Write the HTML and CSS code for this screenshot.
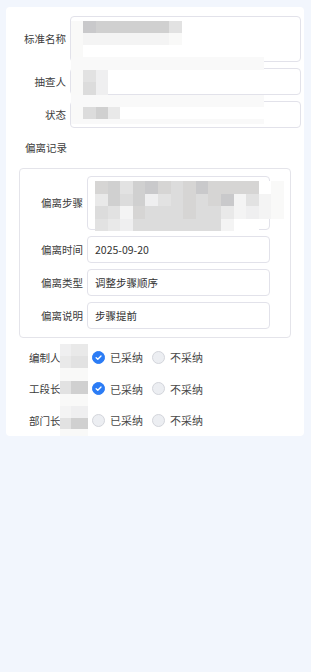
FILE: index.html
```html
<!DOCTYPE html>
<html lang="zh">
<head>
<meta charset="utf-8">
<title>偏离记录</title>
<link rel="stylesheet" href="styles.css">
</head>
<body>
<div class="card">
  <div class="mask-top">
    <div class="mrow h12"><i class="c g9"></i><i class="c g1"></i><i class="c g2"></i><i class="c g2"></i><i class="c g2"></i><i class="c g2"></i><i class="c g2"></i><i class="c g2"></i><i class="c g5"></i></div>
    <div class="mrow h12"><i class="c g9"></i><i class="c g8"></i><i class="c g8"></i><i class="c g8"></i><i class="c g8"></i><i class="c g8"></i><i class="c g8"></i><i class="c g8"></i><i class="c g9"></i></div>
    <div class="mrow h12"><i class="c g9"></i></div>
    <div class="mrow h13 band"></div>
    <div class="mrow h12"><i class="c g9"></i><i class="c g5"></i><i class="c g7"></i></div>
    <div class="mrow h13"><i class="c g9"></i><i class="c g4"></i><i class="c g7"></i></div>
    <div class="mrow h12 band"></div>
    <div class="mrow h12"><i class="c g9"></i><i class="c g4"></i><i class="c g2"></i><i class="c g6"></i></div>
    <div class="mrow h5 band"></div>
  </div>

  <div class="field">
    <span class="label">标准名称</span>
    <div class="box area"></div>
  </div>
  <div class="field">
    <span class="label">抽查人</span>
    <div class="box"></div>
  </div>
  <div class="field">
    <span class="label">状态</span>
    <div class="box"></div>
  </div>

  <div class="section-title">偏离记录</div>

  <div class="record">
    <div class="field inner">
      <span class="label">偏离步骤</span>
      <div class="box area tall">
        <div class="mask-step">
          <div class="srow"><i class="s g3"></i><i class="s g2"></i><i class="s g5"></i><i class="s g2"></i><i class="s g1"></i><i class="s g3"></i><i class="s g4"></i><i class="s g3"></i><i class="s g1"></i><i class="s g3"></i><i class="s g3"></i><i class="s g3"></i><i class="s g3"></i><i class="s w"></i><i class="s g9"></i></div>
          <div class="srow"><i class="s g6"></i><i class="s g2"></i><i class="s g4"></i><i class="s g2"></i><i class="s g7"></i><i class="s g5"></i><i class="s g4"></i><i class="s g3"></i><i class="s g4"></i><i class="s g3"></i><i class="s g1"></i><i class="s g8"></i><i class="s g5"></i><i class="s g8"></i><i class="s g9"></i></div>
          <div class="srow"><i class="s g4"></i><i class="s g5"></i><i class="s g8"></i><i class="s g3"></i><i class="s g4"></i><i class="s g4"></i><i class="s g4"></i><i class="s g3"></i><i class="s g4"></i><i class="s g4"></i><i class="s g6"></i><i class="s g8"></i><i class="s g7"></i><i class="s g8"></i><i class="s g9"></i></div>
          <div class="srow"><i class="s g5"></i><i class="s g6"></i><i class="s g7"></i><i class="s g4"></i><i class="s g4"></i><i class="s g4"></i><i class="s g4"></i><i class="s g4"></i><i class="s g4"></i><i class="s g4"></i><i class="s g8"></i><i class="s w"></i><i class="s w"></i></div>
        </div>
      </div>
    </div>
    <div class="field inner">
      <span class="label">偏离时间</span>
      <div class="box">2025-09-20</div>
    </div>
    <div class="field inner">
      <span class="label">偏离类型</span>
      <div class="box">调整步骤顺序</div>
    </div>
    <div class="field inner">
      <span class="label">偏离说明</span>
      <div class="box">步骤提前</div>
    </div>
  </div>

  <div class="approvals">
    <div class="mask-names">
      <div class="nrow h12"><i class="n1 g7"></i><i class="n2 g6"></i></div>
      <div class="nrow h12"><i class="n1 g6"></i><i class="n2 g5"></i></div>
      <div class="nrow h13"><i class="n1 g9"></i><i class="n2 g9"></i></div>
      <div class="nrow h13"><i class="n1 g5"></i><i class="n2 g2"></i></div>
      <div class="nrow h12"><i class="n1 g9"></i><i class="n2 g9"></i></div>
      <div class="nrow h12"><i class="n1 g8"></i><i class="n2 g7"></i></div>
      <div class="nrow h11"><i class="n1 g5"></i><i class="n2 g2"></i></div>
      <div class="nrow h10"><i class="n1 g9"></i><i class="n2 g9"></i></div>
    </div>

    <div class="approval">
      <span class="who">编制人</span>
      <label class="radio"><span class="dot on"><svg viewBox="0 0 14 14"><path d="M4 7.3 L6.1 9.3 L10.2 5"/></svg></span>已采纳</label>
      <label class="radio"><span class="dot"></span>不采纳</label>
    </div>
    <div class="approval">
      <span class="who">工段长</span>
      <label class="radio"><span class="dot on"><svg viewBox="0 0 14 14"><path d="M4 7.3 L6.1 9.3 L10.2 5"/></svg></span>已采纳</label>
      <label class="radio"><span class="dot"></span>不采纳</label>
    </div>
    <div class="approval">
      <span class="who">部门长</span>
      <label class="radio"><span class="dot"></span>已采纳</label>
      <label class="radio"><span class="dot"></span>不采纳</label>
    </div>
  </div>
</div>
</body>
</html>
```

FILE: styles.css
```css
* { box-sizing: border-box; }

html, body {
  margin: 0;
  padding: 0;
  background: #f2f6fd;
  font-family: "Noto Sans CJK SC", "Noto Sans", sans-serif;
  color: #3a3a3a;
}

.card {
  position: relative;
  margin: 7px 7px 0 6px;
  padding: 9px 3px 0 0;
  background: #ffffff;
  border-radius: 4px;
}

.field {
  display: flex;
  align-items: center;
  gap: 4px;
  margin-bottom: 6px;
}

.label {
  flex: none;
  width: 60px;
  text-align: right;
  font-size: 10.5px;
  line-height: 14px;
  color: #3c3c3c;
}

.box {
  position: relative;
  flex: 1;
  height: 27px;
  border: 1px solid #e2e2ea;
  border-radius: 4px;
  background: #fff;
  padding: 0 7px;
  font-size: 10.5px;
  line-height: 25px;
  color: #333;
}

.box.area { height: 46px; }
.box.tall { height: 54px; }

.section-title {
  margin: 13px 0 0 19px;
  font-size: 10.5px;
  line-height: 14px;
  color: #3c3c3c;
}

.record {
  margin: 13px 10px 0 13px;
  padding: 7px 20px 2px 0;
  border: 1px solid #e4e4ea;
  border-radius: 4px;
}

.field.inner .label { width: 63px; }

.approvals {
  position: relative;
  margin-top: 3.5px;
  padding-left: 23px;
}

.approval {
  display: flex;
  align-items: center;
  height: 31.5px;
}

.who {
  width: 63px;
  font-size: 10.5px;
  color: #3c3c3c;
}

.radio {
  display: flex;
  align-items: center;
  gap: 5px;
  margin-right: 9px;
  font-size: 11px;
  color: #4a4a4a;
}

.dot {
  width: 13px;
  height: 13px;
  border-radius: 50%;
  border: 1px solid #d3d5db;
  background: #eceef2;
  display: flex;
  align-items: center;
  justify-content: center;
}

.dot.on {
  border-color: #2b7cf5;
  background: #2b7cf5;
}

.dot svg { width: 13px; height: 13px; }
.dot svg path {
  fill: none;
  stroke: #fff;
  stroke-width: 1.7;
  stroke-linecap: round;
  stroke-linejoin: round;
}

/* pixelated masks over personal data */
.mask-top {
  position: absolute;
  left: 65px;
  top: 14px;
  width: 193px;
  z-index: 2;
}

.mrow { display: flex; }
.mrow.band { background: #f9f9f9; }
.h5 { height: 5px; }
.h10 { height: 10px; }
.h11 { height: 11px; }
.h12 { height: 12px; }
.h13 { height: 13px; }

.c { flex: none; width: 12.3px; height: 100%; }

.mask-step {
  position: absolute;
  left: 7px;
  top: 4px;
  z-index: 2;
}

.srow { display: flex; height: 12.5px; }
.s { flex: none; width: 12.6px; height: 100%; }
.s.w { background: #ffffff; }

.mask-names {
  position: absolute;
  left: 54px;
  top: 2.5px;
  z-index: 2;
}

.nrow { display: flex; }
.n1 { width: 11px; height: 100%; }
.n2 { width: 17px; height: 100%; }

.g1 { background: #c9c9cb; }
.g2 { background: #d0d0d0; }
.g3 { background: #d6d5d4; }
.g4 { background: #dcdcdc; }
.g5 { background: #e2e2e2; }
.g6 { background: #e9e9e9; }
.g7 { background: #efeff0; }
.g8 { background: #f4f4f4; }
.g9 { background: #f9f9f8; }
```
